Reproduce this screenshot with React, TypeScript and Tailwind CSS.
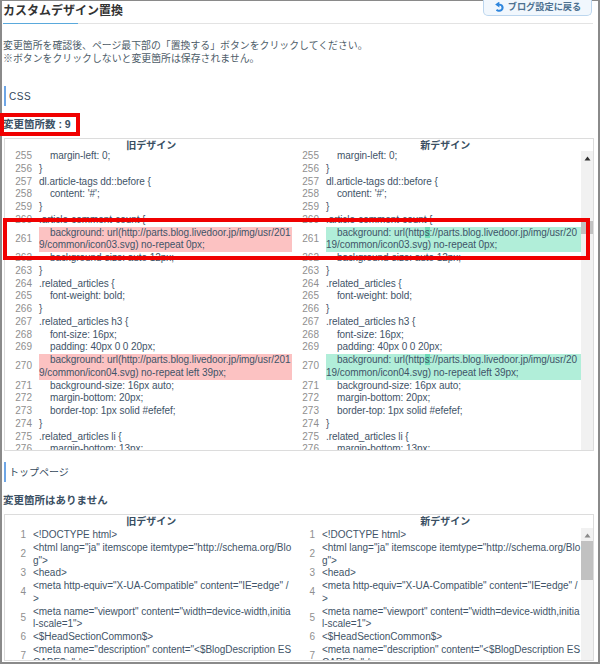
import type { ReactNode } from 'react'

const jp = "font-['Liberation_Sans','Noto_Sans_CJK_JP',sans-serif]"

type Row = { n: number; old?: ReactNode; next?: ReactNode; text?: string; changed?: boolean }

const cssRows: Row[] = [
  { n: 255, text: '    margin-left: 0;' },
  { n: 256, text: '}' },
  { n: 257, text: 'dl.article-tags dd::before {' },
  { n: 258, text: "    content: '#';" },
  { n: 259, text: '}' },
  { n: 260, text: '.article-comment-count {' },
  {
    n: 261,
    changed: true,
    old: '    background: url(http://parts.blog.livedoor.jp/img/usr/2019/common/icon03.svg) no-repeat 0px;',
    next: (
      <>
        {'    background: url(http'}
        <span className="bg-[#6fdcb8]">s</span>
        {'://parts.blog.livedoor.jp/img/usr/2019/common/icon03.svg) no-repeat 0px;'}
      </>
    )
  },
  { n: 262, text: '    background-size: auto 12px;' },
  { n: 263, text: '}' },
  { n: 264, text: '.related_articles {' },
  { n: 265, text: '    font-weight: bold;' },
  { n: 266, text: '}' },
  { n: 267, text: '.related_articles h3 {' },
  { n: 268, text: '    font-size: 16px;' },
  { n: 269, text: '    padding: 40px 0 0 20px;' },
  {
    n: 270,
    changed: true,
    old: '    background: url(http://parts.blog.livedoor.jp/img/usr/2019/common/icon04.svg) no-repeat left 39px;',
    next: (
      <>
        {'    background: url(http'}
        <span className="bg-[#6fdcb8]">s</span>
        {'://parts.blog.livedoor.jp/img/usr/2019/common/icon04.svg) no-repeat left 39px;'}
      </>
    )
  },
  { n: 271, text: '    background-size: 16px auto;' },
  { n: 272, text: '    margin-bottom: 20px;' },
  { n: 273, text: '    border-top: 1px solid #efefef;' },
  { n: 274, text: '}' },
  { n: 275, text: '.related_articles li {' },
  { n: 276, text: '    margin-bottom: 13px;' }
]

const topRows: Row[] = [
  { n: 1, text: '<!DOCTYPE html>' },
  { n: 2, text: '<html lang="ja" itemscope itemtype="http://schema.org/Blog">' },
  { n: 3, text: '<head>' },
  { n: 4, text: '<meta http-equiv="X-UA-Compatible" content="IE=edge" />' },
  { n: 5, text: '<meta name="viewport" content="width=device-width,initial-scale=1">' },
  { n: 6, text: '<$HeadSectionCommon$>' },
  { n: 7, text: '<meta name="description" content="<$BlogDescription ESCAPE$>" />' }
]

function SectionHeading({ children, className }: { children: ReactNode; className?: string }) {
  return (
    <div className={`h-[20px] border-l-[2px] border-[#6ea6e6] pl-[3px] text-[#33475b] flex items-center ${className}`}>
      {children}
    </div>
  )
}

function DiffTable({
  rows,
  height,
  gutterOld,
  gutterNew,
  tracking,
  headerHeight,
  trackClass,
  thumbClass,
  arrowColor
}: {
  rows: Row[]
  height: string
  gutterOld: string
  gutterNew: string
  tracking: string
  headerHeight: string
  trackClass: string
  thumbClass: string
  arrowColor: string
}) {
  const cells = (side: 'old' | 'next') =>
    rows.map((r) => {
      const bg = r.changed ? (side === 'old' ? 'bg-[#fcc2c2]' : 'bg-[#b1eed9]') : ''
      const content = r.changed ? r[side] : r.text
      return (
        <div key={r.n} className="flex items-center">
          <div className={`shrink-0 text-right text-[#8f8f8f] ${side === 'old' ? gutterOld : gutterNew}`}>{r.n}</div>
          <div className={`ml-[7px] flex-1 min-w-0 whitespace-pre-wrap break-all ${tracking} ${bg}`}>{content}</div>
        </div>
      )
    })

  return (
    <div className={`ml-[2px] w-[590px] border border-[#dcdcdc] overflow-hidden ${height}`}>
      <div className={`flex text-[#3a4f63] text-[10px] leading-[13px] font-bold ${headerHeight}`}>
        <div className="w-[293px] text-center">旧デザイン</div>
        <div className="w-[296px] text-center">新デザイン</div>
      </div>
      <div className="flex text-[10px] leading-[12.75px] text-[#3f5468]">
        <div className="w-[287px] shrink-0">{cells('old')}</div>
        <div className="w-[289px] shrink-0">{cells('next')}</div>
        <div className={`w-[12px] shrink-0 bg-[#f1f1f1] h-[300px] flex flex-col items-center ${trackClass}`}>
          <svg width="7" height="5" viewBox="0 0 7 5" className="mt-[5px]">
            <path d="M3.5 0.5 L6.5 4.5 H0.5 Z" fill={arrowColor} />
          </svg>
          <div className={`w-full bg-[#c1c1c1] ${thumbClass}`} />
        </div>
      </div>
    </div>
  )
}

export default function App() {
  return (
    <div className={`relative w-[600px] h-[664px] bg-white border-x-[2px] border-t border-b-[2px] border-[#8a8a8a] ${jp}`}>
      {/* Header */}
      <div className="relative h-[23px] ml-[1px] mr-[5px] border-b border-[#e3e3e3]">
        <div className="text-[12px] leading-[20px] font-bold text-[#333]">カスタムデザイン置換</div>
        <div className="absolute left-0 -bottom-px w-[75px] h-px bg-[#5aa9dc]" />
        <div className="absolute right-[1px] top-[-1px] w-[109px] h-[16px] rounded-b-[5px] border border-t-0 border-[#bcd6ee] bg-[#f1f7fd] flex items-center justify-center gap-[3px] text-[9.2px] font-bold text-[#4d7191] overflow-hidden">
          <svg width="11" height="11" viewBox="0 0 24 24">
            <path
              d="M21 12c0 5.500-4 9.500-9.500 9.500-3 0-5.500-1-7.500-3l3-3.500c1.200 1.200 2.800 2 4.500 2 3 0 4.800-2.200 4.800-5 0-2.700-2-4.600-4.600-4.600V12L2.500 5.500 11.700-1v5c5.500 0 9.300 3.500 9.300 8z"
              fill="#2f86dd"
            />
          </svg>
          ブログ設定に戻る
        </div>
      </div>

      <p className="ml-[1px] mt-[15px] text-[9.9px] leading-[13px] text-[#4d5c68]">
        変更箇所を確認後、ページ最下部の「置換する」ボタンをクリックしてください。
        <br />
        ※ボタンをクリックしないと変更箇所は保存されません。
      </p>

      <SectionHeading className="ml-[2px] mt-[21px] text-[10px] tracking-[0.5px]">CSS</SectionHeading>

      <div className="ml-[1px] mt-[11px] text-[10.5px] leading-[14px] font-bold text-[#3a4f63]">
        変更箇所数 : 9
      </div>

      <div className="mt-[7px]">
        <DiffTable
          rows={cssRows}
          height="h-[313px]"
          gutterOld="w-[27px]"
          gutterNew="w-[27px]"
          tracking="tracking-[-0.06px]"
          headerHeight="h-[11px]"
          trackClass="mt-[1px]"
          thumbClass="mt-[60px] h-[13px]"
          arrowColor="#303030"
        />
      </div>

      <SectionHeading className="ml-[2px] mt-[11px] text-[10px]">トップページ</SectionHeading>

      <div className="ml-[1px] mt-[11px] text-[10.5px] leading-[14px] font-bold text-[#3a4f63]">変更箇所はありません</div>

      <div className="mt-[7px]">
        <DiffTable
          rows={topRows}
          height="h-[147px]"
          gutterOld="w-[21px]"
          gutterNew="w-[23px]"
          tracking="tracking-[-0.03px]"
          headerHeight="h-[14px]"
          trackClass="-mt-[1px]"
          thumbClass="mt-[3px] h-[39px]"
          arrowColor="#8a8a8a"
        />
      </div>

      {/* Red annotation boxes */}
      <div className="absolute left-[-2px] top-[112px] w-[80px] h-[23px] border-[4px] border-[#f00000]" />
      <div className="absolute left-[1px] top-[217px] w-[587px] h-[42px] border-[4px] border-[#f00000]" />
    </div>
  )
}
